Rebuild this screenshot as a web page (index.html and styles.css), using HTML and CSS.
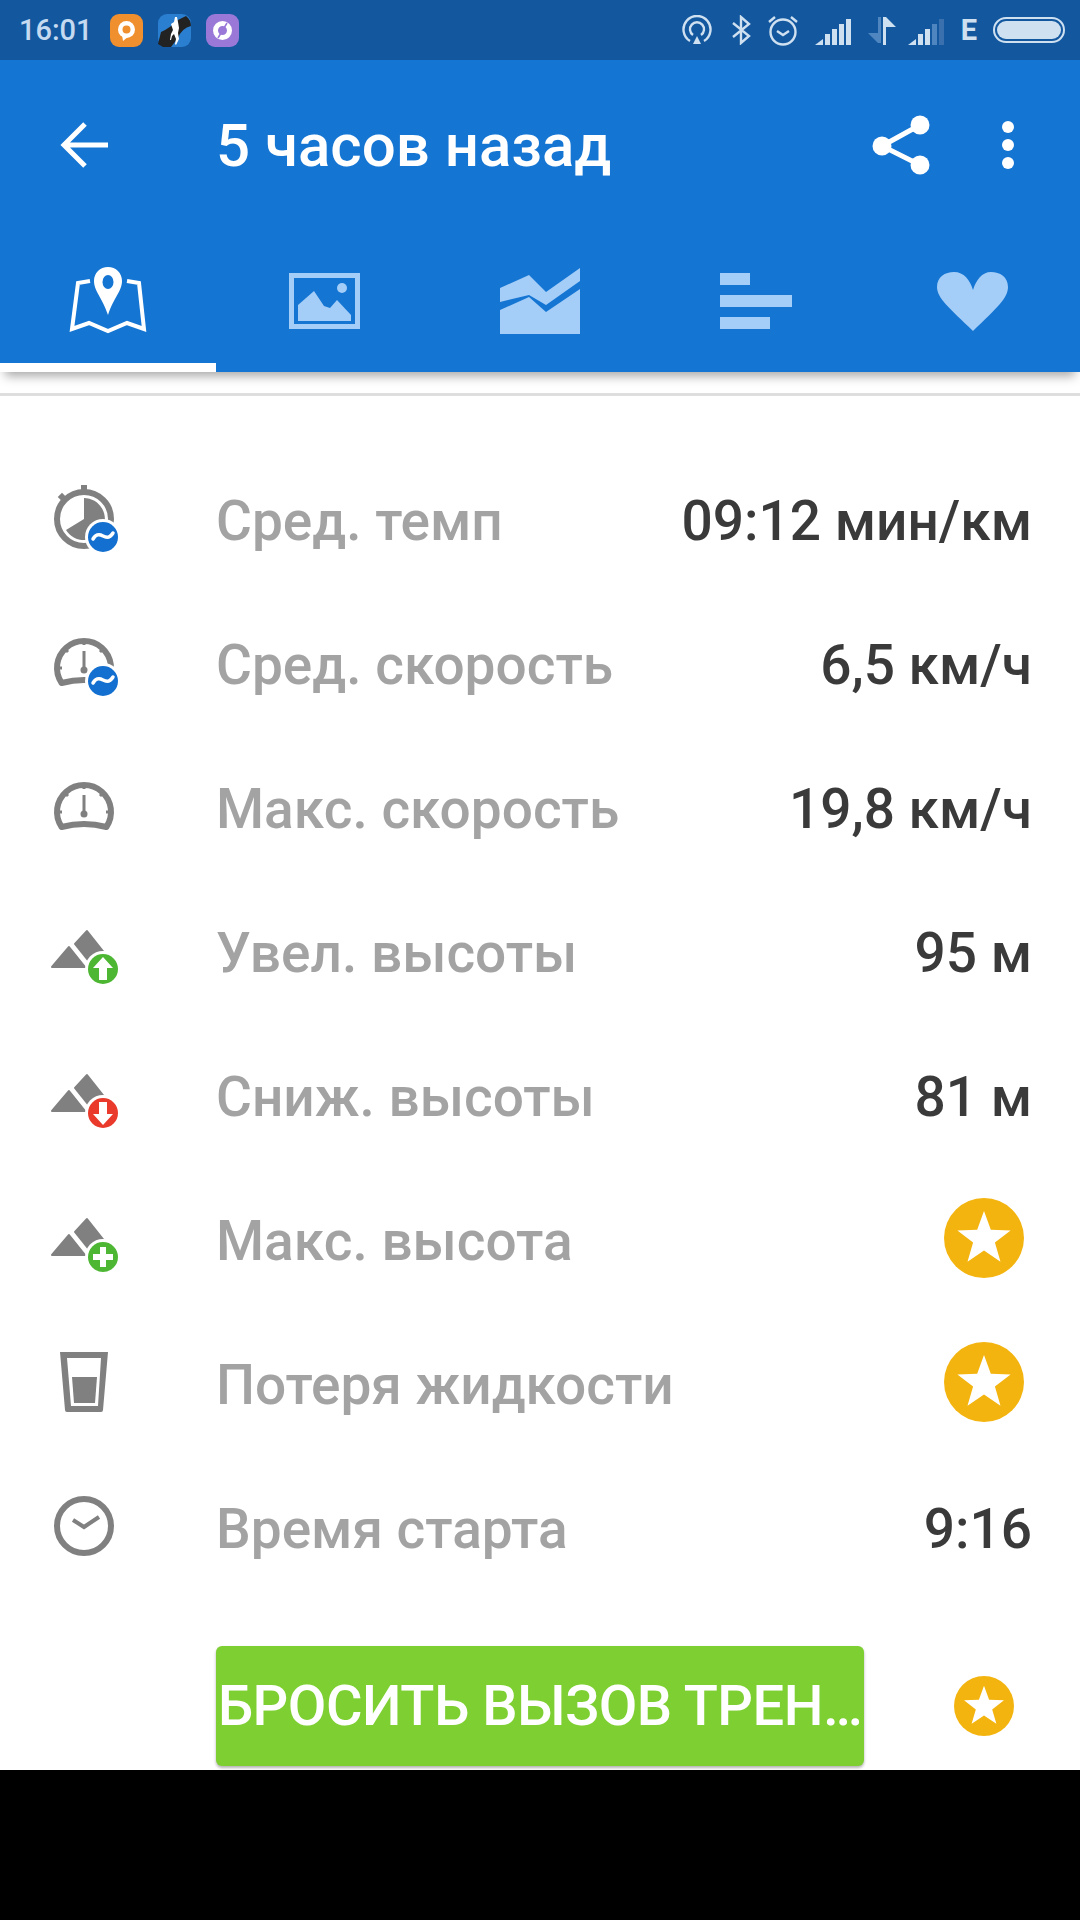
FILE: index.html
```html
<!DOCTYPE html>
<html lang="ru">
<head>
  <meta charset="UTF-8">
  <title>5 часов назад</title>
  <link rel="stylesheet" href="styles.css">
</head>
<body>
  <svg class="defs">
    <symbol id="star" viewBox="0 0 80 80">
      <circle cx="40" cy="40" r="40" fill="#f4b40f"/>
      <polygon fill="#fff" points="40,13 46.8,31.7 66.6,32.4 50.9,44.6 56.5,63.7 40,52.5 23.5,63.7 29.1,44.6 13.4,32.4 33.2,31.7"/>
    </symbol>
    <symbol id="mountains" viewBox="0 0 80 80">
      <polygon fill="#808080" stroke="#808080" stroke-width="2" stroke-linejoin="round" points="39,18 27,31 43,51 58,42"/>
      <polygon fill="#808080" stroke="#808080" stroke-width="2" stroke-linejoin="round" points="21,34 4,54 37,54"/>
    </symbol>
    <symbol id="gauge" viewBox="0 0 80 80">
      <path d="M13.6 58A27 27 0 1 1 58.4 58Q36 52 13.6 58Z" fill="none" stroke="#808080" stroke-width="6" stroke-linejoin="round"/>
      <path d="M36 26V45M36 16V20M17 24l3 3M55 24l-3 3M9 43h5M63 43h-5" stroke="#808080" stroke-width="3" fill="none"/>
      <circle cx="36" cy="45" r="3.5" fill="#808080"/>
    </symbol>
    <symbol id="wave" viewBox="0 0 80 80">
      <circle cx="55" cy="56" r="18" fill="#fff"/>
      <circle cx="55" cy="56" r="15" fill="#1470d0"/>
      <path d="M45 58c3-5 6-5 10-3s7 2 10-3" fill="none" stroke="#fff" stroke-width="3.5" stroke-linecap="round"/>
    </symbol>
  </svg>

  <div class="statusbar">
    <span class="clock">16:01</span>
    <svg class="app-ico" viewBox="0 0 33 33">
      <rect width="33" height="33" rx="9" fill="#ef8f2e"/>
      <circle cx="16.5" cy="15.5" r="8.5" fill="#fff"/>
      <polygon points="12,21 13,27 19,22" fill="#fff"/>
      <circle cx="16.5" cy="15.5" r="4" fill="#ef8f2e"/>
    </svg>
    <svg class="app-ico" viewBox="0 0 33 33">
      <rect width="33" height="33" rx="9" fill="#2a7fd0"/>
      <path d="M0 30 L3 18 Q12 14 20 6 L28 2 Q33 6 33 12 Q24 14 20 24 L13 33 H5Z" fill="#222"/>
      <path d="M13 10l3-2 1-5 2 0 1 5 1 6-1 5 1 6-3 6-1-1 1-5-2-5-2 2-1 4-1 0 1-6 2-4-1-3z" fill="#fff"/>
    </svg>
    <svg class="app-ico" viewBox="0 0 33 33">
      <rect width="33" height="33" rx="9" fill="#9a78d8"/>
      <circle cx="16.5" cy="16.5" r="7" fill="none" stroke="#fff" stroke-width="5"/>
      <path d="M21 9L18 14M12 24L15 19" stroke="#9a78d8" stroke-width="1.5"/>
    </svg>
    <div class="status-right">
      <svg class="st-hot" viewBox="0 0 30 30" fill="none" stroke="#cfe0f1" stroke-width="2.4">
        <path d="M8 26A13.5 13.5 0 1 1 22 26"/>
        <path d="M11 20A7 7 0 1 1 19 20"/>
        <polygon points="15,21 19,29 11,29" fill="#cfe0f1" stroke="none"/>
      </svg>
      <svg class="st-bt" viewBox="0 0 20 30" fill="none" stroke="#cfe0f1" stroke-width="2.4">
        <path d="M2 8L18 21L10 28V2L18 9L2 22"/>
      </svg>
      <svg class="st-alarm" viewBox="0 0 32 32" fill="none" stroke="#cfe0f1" stroke-width="2.4">
        <circle cx="16" cy="18" r="12.5"/>
        <path d="M10 17l6 4 6-4M2 8l6-5M30 8l-6-5"/>
      </svg>
      <svg class="st-signal" viewBox="0 0 37 26" fill="#cfe0f1">
        <polygon points="0,26 8,20 8,26"/>
        <rect x="10" y="15" width="5" height="11"/>
        <rect x="17" y="10" width="5" height="16"/>
        <rect x="24" y="5" width="5" height="21"/>
        <rect x="31" y="0" width="5" height="26"/>
      </svg>
      <svg class="st-arrows" viewBox="0 0 28 28">
        <path d="M13 0V26H10V16V26L0 16H10V0Z" fill="#4f86c0"/>
        <path d="M15 28V0H18L28 10H18V28Z" fill="#cfe0f1"/>
      </svg>
      <svg class="st-signal st-signal-dim" viewBox="0 0 37 26">
        <polygon points="0,26 8,20 8,26" fill="#cfe0f1"/>
        <rect x="10" y="15" width="5" height="11" fill="#cfe0f1"/>
        <rect x="17" y="10" width="5" height="16" fill="#cfe0f1"/>
        <rect x="24" y="5" width="5" height="21" fill="#4f86c0"/>
        <rect x="31" y="0" width="5" height="26" fill="#3a70ad"/>
      </svg>
      <span class="net">E</span>
      <div class="battery"><div class="battery-fill"></div></div>
    </div>
  </div>

  <header class="appbar">
    <div class="toolbar">
      <svg class="back" viewBox="0 0 48 48" fill="none" stroke="#fff" stroke-width="5">
        <path d="M48 24H4M25 3L4 24L25 45"/>
      </svg>
      <h1 class="title">5 часов назад</h1>
      <svg class="share" viewBox="0 0 58 60" fill="#fff" stroke="#fff">
        <path d="M48 10L10 31L48 50" fill="none" stroke-width="5"/>
        <circle cx="48" cy="10" r="9.5" stroke="none"/>
        <circle cx="10" cy="31" r="9.5" stroke="none"/>
        <circle cx="48" cy="50" r="9.5" stroke="none"/>
      </svg>
      <svg class="more" viewBox="0 0 12 48" fill="#fff">
        <circle cx="6" cy="6" r="6"/>
        <circle cx="6" cy="24" r="6"/>
        <circle cx="6" cy="42" r="6"/>
      </svg>
    </div>
    <nav class="tabs">
      <div class="tab tab-on">
        <svg class="ti-map" viewBox="0 0 78 68">
          <path d="M21 14L9 16L3 62L20 56L39 64L58 56L75 62L70 16L58 14" fill="none" stroke="#fff" stroke-width="4"/>
          <path d="M39 48C33 30 25 24 25 14C25 6 31 0 39 0S53 6 53 14C53 24 45 30 39 48Z" fill="#fff"/>
          <ellipse cx="39" cy="15" rx="5.5" ry="7" fill="#1475d3"/>
        </svg>
      </div>
      <div class="tab">
        <svg class="ti-photo" viewBox="0 0 71 56" fill="#a4cdf8">
          <rect x="2.5" y="2.5" width="66" height="51" fill="none" stroke="#a4cdf8" stroke-width="5"/>
          <polygon points="9,48 9,32 25,18 35,33 41,35 48,27 62,42 62,48"/>
          <circle cx="53" cy="15" r="5"/>
        </svg>
      </div>
      <div class="tab">
        <svg class="ti-chart" viewBox="0 0 80 66" fill="#a4cdf8">
          <polygon points="0,20 29,7 46,24 80,0 80,13 46,37 29,27 0,34"/>
          <polygon points="0,42 29,29 46,44 80,21 80,66 0,66"/>
        </svg>
      </div>
      <div class="tab">
        <div class="ti-bars">
          <div class="bar bar-s"></div>
          <div class="bar bar-l"></div>
          <div class="bar bar-m"></div>
        </div>
      </div>
      <div class="tab">
        <svg class="ti-heart" viewBox="0 0 71 59" fill="#a4cdf8">
          <path d="M36 59C12 36 0 26 0 15C0 5 8 0 17 0C27 0 33 8 36 18C39 8 45 0 54 0C63 0 71 5 71 15C71 26 60 36 36 59Z"/>
        </svg>
      </div>
    </nav>
  </header>

  <div class="rule"></div>

  <main class="stats">
    <div class="row">
      <svg class="ico" viewBox="0 0 80 80">
        <circle cx="36" cy="38" r="27" fill="none" stroke="#808080" stroke-width="6"/>
        <rect x="33" y="4" width="6" height="7" fill="#808080"/>
        <rect x="11" y="13" width="6" height="7" fill="#808080" transform="rotate(-45 14 16)"/>
        <path d="M36 17A21 21 0 1 1 18 49L36 38Z" fill="#808080"/>
        <use href="#wave" width="80" height="80"/>
      </svg>
      <span class="label">Сред. темп</span>
      <span class="value">09:12 мин/км</span>
    </div>
    <div class="row">
      <svg class="ico" viewBox="0 0 80 80">
        <use href="#gauge" width="80" height="80"/>
        <use href="#wave" width="80" height="80"/>
      </svg>
      <span class="label">Сред. скорость</span>
      <span class="value">6,5 км/ч</span>
    </div>
    <div class="row">
      <svg class="ico" viewBox="0 0 80 80">
        <use href="#gauge" width="80" height="80"/>
      </svg>
      <span class="label">Макс. скорость</span>
      <span class="value">19,8 км/ч</span>
    </div>
    <div class="row">
      <svg class="ico" viewBox="0 0 80 80">
        <use href="#mountains" width="80" height="80"/>
        <circle cx="55" cy="56" r="18" fill="#fff"/>
        <circle cx="55" cy="56" r="15" fill="#4db733"/>
        <polygon fill="#fff" points="55,44 65,55 59,55 59,67 51,67 51,55 45,55"/>
      </svg>
      <span class="label">Увел. высоты</span>
      <span class="value">95 м</span>
    </div>
    <div class="row">
      <svg class="ico" viewBox="0 0 80 80">
        <use href="#mountains" width="80" height="80"/>
        <circle cx="55" cy="56" r="18" fill="#fff"/>
        <circle cx="55" cy="56" r="15" fill="#e93a2c"/>
        <polygon fill="#fff" points="55,68 65,57 59,57 59,45 51,45 51,57 45,57"/>
      </svg>
      <span class="label">Сниж. высоты</span>
      <span class="value">81 м</span>
    </div>
    <div class="row">
      <svg class="ico" viewBox="0 0 80 80">
        <use href="#mountains" width="80" height="80"/>
        <circle cx="55" cy="56" r="18" fill="#fff"/>
        <circle cx="55" cy="56" r="15" fill="#4db733"/>
        <path d="M55 46V66M45 56H65" stroke="#fff" stroke-width="6"/>
      </svg>
      <span class="label">Макс. высота</span>
      <svg class="star"><use href="#star" width="80" height="80"/></svg>
    </div>
    <div class="row">
      <svg class="ico" viewBox="0 0 80 80">
        <path d="M12 7H60L55 65Q55 67 53 67H19Q17 67 17 65Z" fill="#808080"/>
        <polygon points="19,13 53,13 50,61 23,61" fill="#fff"/>
        <polygon points="24,32 49,32 47,58 26,58" fill="#808080"/>
      </svg>
      <span class="label">Потеря жидкости</span>
      <svg class="star"><use href="#star" width="80" height="80"/></svg>
    </div>
    <div class="row">
      <svg class="ico" viewBox="0 0 80 80">
        <circle cx="36" cy="37" r="27" fill="none" stroke="#808080" stroke-width="6"/>
        <path d="M25 31L36 38L51 28" fill="none" stroke="#808080" stroke-width="4"/>
      </svg>
      <span class="label">Время старта</span>
      <span class="value">9:16</span>
    </div>
    <div class="challenge">
      <button class="btn">БРОСИТЬ ВЫЗОВ ТРЕН…</button>
      <svg class="star-sm" viewBox="0 0 80 80"><use href="#star" width="80" height="80"/></svg>
    </div>
  </main>

  <footer class="navbar"></footer>
</body>
</html>
```

FILE: styles.css
```css
body {
  margin: 0;
  height: 1920px;
  overflow: hidden;
  display: flex;
  flex-direction: column;
  background-color: #fff;
  font-family: Roboto, "Liberation Sans", sans-serif;
}
.defs {
  display: none;
}

/* status bar */
.statusbar {
  height: 60px;
  flex: none;
  display: flex;
  align-items: center;
  background-color: #13589f;
  padding: 0 15px 0 19px;
}
.clock {
  color: #c5daf0;
  font-size: 29px;
  font-weight: 500;
  width: 91px;
}
.app-ico {
  width: 33px;
  height: 33px;
  margin-right: 15px;
}
.status-right {
  margin-left: auto;
  display: flex;
  align-items: center;
  gap: 16px;
}
.st-hot { width: 30px; height: 30px; }
.st-bt { width: 20px; height: 30px; margin-left: 3px; }
.st-alarm { width: 32px; height: 32px; }
.st-signal { width: 37px; height: 26px; margin-top: 4px; }
.st-signal-dim { margin-left: -4px; }
.st-arrows { width: 28px; height: 28px; margin-top: 2px; }
.net {
  color: #cfe0f1;
  font-size: 29px;
  font-weight: 700;
}
.battery {
  width: 72px;
  height: 26px;
  box-sizing: border-box;
  border: 2px solid #cfe0f1;
  border-radius: 13px;
  padding: 2px;
}
.battery-fill {
  height: 100%;
  background-color: #cfe0f1;
  border-radius: 9px;
}

/* app bar */
.appbar {
  flex: none;
  background-color: #1475d3;
  box-shadow: 0 9px 10px -5px rgba(0,0,0,0.35);
}
.toolbar {
  height: 170px;
  display: flex;
  align-items: center;
  padding-left: 60px;
}
.back {
  width: 48px;
  height: 48px;
  margin-right: 108px;
}
.title {
  margin: 0;
  color: #fff;
  font-size: 60px;
  font-weight: 500;
  flex: 1;
}
.share {
  width: 58px;
  height: 60px;
  margin-right: 72px;
}
.more {
  width: 12px;
  height: 48px;
  margin-right: 66px;
}
.tabs {
  height: 142px;
  display: grid;
  grid-template-columns: repeat(5, 1fr);
}
.tab {
  display: flex;
  align-items: center;
  justify-content: center;
}
.tab-on {
  box-shadow: inset 0 -9px 0 #fff;
}
.ti-map { width: 78px; height: 68px; }
.ti-photo { width: 71px; height: 56px; }
.ti-chart { width: 80px; height: 66px; }
.ti-heart { width: 71px; height: 59px; }
.ti-bars {
  width: 72px;
  display: flex;
  flex-direction: column;
  gap: 10px;
}
.bar {
  height: 12px;
  background-color: #a4cdf8;
}
.bar-s { width: 30px; }
.bar-l { width: 72px; }
.bar-m { width: 50px; }

.rule {
  flex: none;
  height: 24px;
  box-sizing: border-box;
  border-bottom: 3px solid #dedede;
}

/* list */
.stats {
  flex: 1;
  padding-top: 53px;
}
.row {
  height: 144px;
  display: flex;
  align-items: center;
  padding: 0 48px 0 48px;
}
.ico {
  width: 80px;
  height: 80px;
  margin-right: 88px;
}
.label {
  color: #a3a3a3;
  font-size: 55px;
  font-weight: 500;
  flex: 1;
}
.value {
  color: #3a3a3a;
  font-size: 55px;
  font-weight: 500;
}
.star {
  width: 80px;
  height: 80px;
  margin-right: 8px;
  margin-top: -6px;
}
.challenge {
  margin-top: 45px;
  display: flex;
  align-items: center;
  padding-left: 216px;
}
.btn {
  width: 648px;
  height: 120px;
  padding: 0;
  border: none;
  border-radius: 6px;
  background-color: #7ed032;
  color: #fff;
  font-family: inherit;
  font-size: 56px;
  font-weight: 500;
  letter-spacing: -0.5px;
  white-space: nowrap;
  box-shadow: 0 2px 3px rgba(0,0,0,0.3);
}
.star-sm {
  width: 60px;
  height: 60px;
  margin-left: 90px;
}
.navbar {
  height: 150px;
  flex: none;
  background-color: #000;
}
```
